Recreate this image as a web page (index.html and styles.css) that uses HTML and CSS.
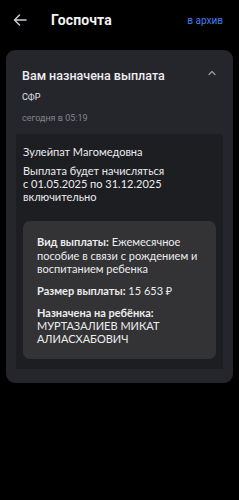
FILE: index.html
```html
<!DOCTYPE html>
<html lang="ru">
<head>
<meta charset="utf-8">
<link rel="stylesheet" href="styles.css">
</head>
<body>
<div class="screen">
  <header class="topbar">
    <svg class="back" width="14" height="12" viewBox="0 0 14 12"><path d="M13 6H1.5M6.5 1L1.5 6l5 5" fill="none" stroke="#c9cbd1" stroke-width="1.5" stroke-linecap="round" stroke-linejoin="round"/></svg>
    <h1 class="title">Госпочта</h1>
    <span class="archive">в архив</span>
  </header>
  <section class="card">
    <div class="card-head">
      <div class="head-text">
        <h2 class="subject">Вам назначена выплата</h2>
        <div class="sender">СФР</div>
        <div class="date">сегодня в 05:19</div>
      </div>
      <svg class="chev" width="8" height="6" viewBox="0 0 8 6"><path d="M1 4.5l3-3 3 3" fill="none" stroke="#9a9ca3" stroke-width="1.3" stroke-linecap="round" stroke-linejoin="round"/></svg>
    </div>
    <div class="body">
      <p class="para">Зулейпат Магомедовна</p>
      <p class="para narrow">Выплата будет начисляться с 01.05.2025 по 31.12.2025 включительно</p>
      <div class="info">
        <p class="row"><b>Вид выплаты:</b> Ежемесячное пособие в связи с рождением и воспитанием ребенка</p>
        <p class="row"><b>Размер выплаты:</b> 15 653 ₽</p>
        <p class="row"><b>Назначена на ребёнка:</b><br>МУРТАЗАЛИЕВ МИКАТ АЛИАСХАБОВИЧ</p>
      </div>
    </div>
  </section>
</div>
</body>
</html>
```
FILE: styles.css
```css
html, body {
  margin: 0;
  padding: 0;
  background: #000;
}
body {
  width: 239px;
  height: 500px;
  overflow: hidden;
  font-family: Roboto, "Noto Sans", sans-serif;
  color: #e9e9ec;
}
.screen {
  padding: 0 6px;
}
.topbar {
  display: flex;
  align-items: center;
  height: 40px;
  padding: 0 0 0 7px;
  margin-bottom: 10px;
}
.back {
  margin-top: -1px;
}
.title {
  margin: 0 0 0 24px;
  font-size: 14px;
  font-weight: 700;
  color: #f2f2f4;
  flex: 1;
  letter-spacing: 0.1px;
}
.archive {
  font-size: 10px;
  color: #3d82e8;
  margin-right: 10px;
}
.card {
  background: #25262b;
  border-radius: 9px;
  padding: 0 10px 14px;
}
.card-head {
  display: flex;
  align-items: flex-start;
  padding: 18px 6px 10px 6px;
}
.head-text {
  flex: 1;
}
.subject {
  margin: 0;
  font-size: 12.5px;
  font-weight: 500;
  color: #eeeef1;
  line-height: 16px;
}
.sender {
  font-size: 9px;
  color: #e4e4e8;
  margin-top: 7px;
  line-height: 12px;
}
.date {
  font-size: 9px;
  color: #80838b;
  margin-top: 9px;
  line-height: 12px;
}
.chev {
  margin: 2px 1px 0 0;
}
.body {
  background: #1d1e21;
  padding: 11px 7px 10px;
  font-family: Lato, "Noto Sans", sans-serif;
  font-size: 11px;
  line-height: 13px;
  color: #ececef;
  font-variant-numeric: tabular-nums;
}
.para {
  margin: 0 0 6px;
}
.narrow {
  max-width: 148px;
}
.info {
  margin-top: 18px;
  background: #333335;
  border-radius: 7px;
  padding: 14px 14px 14px;
  line-height: 13.5px;
}
.row {
  margin: 0 0 8.5px;
}
.row + .row + .row {
  margin-top: 1px;
  line-height: 13px;
}
.row:last-child {
  margin-bottom: 0;
}
.row b {
  font-weight: 700;
}
```
